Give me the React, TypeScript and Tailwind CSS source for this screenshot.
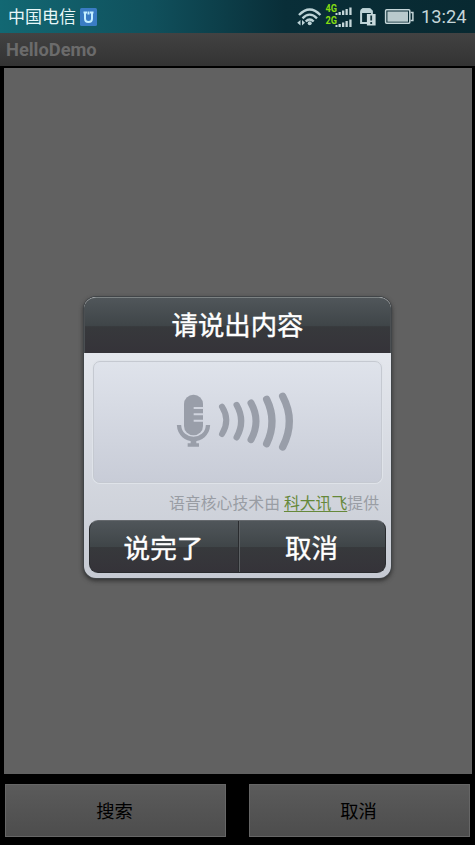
const FONT = "font-['Roboto','Noto_Sans_CJK_SC',sans-serif]";

function NetworkBadge() {
  return (
    <svg className="ml-[4px] h-[18px] w-[17px]" viewBox="0 0 17 18">
      <rect width="17" height="18" rx="1.5" fill="#3a7cc4" />
      <path d="M3.5 4.5H7M10 4.5h3.5M5 4.5v6q0 3.5 3.5 3.5t3.5-3.5v-6M8.5 3.5v3" fill="none" stroke="#c4efff" strokeWidth="2" />
    </svg>
  );
}

function StatusIcons() {
  return (
    <svg className="h-[33px] w-[122px]" viewBox="0 0 122 33">
      <g fill="none" stroke="#bdd3d7" strokeWidth="2.4">
        <path d="M3 15Q13.700 4 24.400 15" />
        <path d="M6.500 18.300Q13.700 11 21 18.300" />
        <path d="M9.700 21.500Q13.700 17.400 17.700 21.500" />
      </g>
      <circle cx="13.700" cy="23.300" r="2" fill="#bdd3d7" />
      <path d="M4.500 20v5.600L1.200 22.800zM6 20v5.600l3-2.800z" fill="#bdd3d7" />
      <text x="29.500" y="12.300" fontSize="10" fontWeight="700" fill="#85dc12" textLength="11.500" lengthAdjust="spacingAndGlyphs">4G</text>
      <text x="29.500" y="24" fontSize="10" fontWeight="700" fill="#85dc12" textLength="11.500" lengthAdjust="spacingAndGlyphs">2G</text>
      <g fill="#c5d6d9">
        <path d="M39.500 13h2v2h-2zM42.500 12h2.300v3h-2.300zM46 10.500h2.300V15H46zM49.500 9h2.300v6h-2.300zM53.300 7.500h2.300V15h-2.300z" />
        <path d="M39.500 25h2v2h-2zM42.500 24h2.300v3h-2.300zM46 22.500h2.300V27H46zM49.500 21h2.300v6h-2.300zM53.300 19.500h2.300V27h-2.300z" />
      </g>
      <g transform="translate(1.400 0)">
        <path d="M70 23h-6.300V12.200L66 9.200h6.500l2 2V14" fill="none" stroke="#bdd3d7" strokeWidth="2" />
        <path d="M63 12V10l1.800-1.800H72l2.500 2.300v2.500H63z" fill="#bdd3d7" />
        <rect x="69.500" y="14" width="8.700" height="11.500" fill="#c8d9dc" />
        <path d="M73.800 15.500v5M73.800 22v2" stroke="#173a42" strokeWidth="1.800" />
      </g>
      <g transform="translate(1.600 0)">
        <rect x="88" y="9.800" width="24.200" height="13.500" rx="1" fill="none" stroke="#c5d6d9" strokeWidth="1.500" />
        <rect x="89.800" y="11.500" width="20.600" height="10.200" fill="#b9cacd" />
        <path d="M113 12.500h2.300v8H113" fill="none" stroke="#c5d6d9" strokeWidth="1.500" />
      </g>
    </svg>
  );
}

function MicWaves() {
  return (
    <svg className="h-[75px] w-[145px]" viewBox="0 0 435 225">
      <rect x="57" y="44" width="57" height="122" rx="28" fill="#999ea9" />
      <path d="M86 84h29M86 103h29M86 122h29" stroke="#d0d4de" strokeWidth="6" />
      <path d="M42 135C45 191 126 191 129 135" fill="none" stroke="#999ea9" strokeWidth="13" />
      <path d="M77 178h17v12h8v10H68v-10h9z" fill="#999ea9" />
      <g fill="none" stroke="#999ea9" strokeLinecap="round">
        <path d="M171 80Q197 121 171 162" strokeWidth="18" />
        <path d="M215 75Q242 123 215 172" strokeWidth="19" />
        <path d="M258 69Q288 123 258 179" strokeWidth="21" />
        <path d="M305 58Q337 124 305 191" strokeWidth="22" />
        <path d="M353 49Q393 124 353 201" strokeWidth="22" />
      </g>
    </svg>
  );
}

const darkPanel = "bg-[linear-gradient(to_bottom,#50565a_0%,#3f4548_51%,#37393c_52%,#353339_100%)]";

function Dialog() {
  return (
    <section className="absolute left-[84px] top-[297px] flex h-[281px] w-[307px] flex-col overflow-hidden rounded-[12px] bg-[linear-gradient(to_bottom,#e4e7ed_56px,#c6cad3_100%)] shadow-[0_0_0_1px_#414548,0_2px_4px_1px_#333]">
      <header className={"flex h-[56px] shrink-0 items-center justify-center rounded-t-[12px] border-t border-[#7c8283] pt-[1px] text-[26.4px] leading-none text-white [-webkit-text-stroke:0.4px_white] shadow-[inset_1px_0_0_#4b4f52,inset_-1px_0_0_#4b4f52] " + darkPanel}>
        <h1 className="font-normal">请说出内容</h1>
      </header>
      <div className="mx-[9px] mt-[8px] flex h-[122px] shrink-0 items-start rounded-[7px] border border-[#c5c9d1] bg-[linear-gradient(to_bottom,#dfe3eb,#c8ccd7)] pl-[71px] pt-[18px] shadow-[0_0_0_1px_#dfe3e9]">
        <MicWaves />
      </div>
      <p className="mt-[8px] flex h-[24px] shrink-0 items-center justify-end whitespace-pre pr-[12px] pt-[1px] text-[15.850px] text-[#999da4]">
        语音核心技术由 <span className="text-[#66883a] underline decoration-1 underline-offset-[2px]">科大讯飞</span>提供
      </p>
      <div className={"mx-[5px] mt-[5px] flex h-[53px] shrink-0 overflow-hidden rounded-[9px] border border-[#292b2e] border-t-[#65696d] text-[26.600px] leading-none text-white [-webkit-text-stroke:0.4px_white] " + darkPanel}>
        <button className="w-[149px] border-r border-[#292b2e] pr-[1px] pt-[5px]">说完了</button>
        <button className="flex-1 border-l border-[#5c6063] pr-[2px] pt-[5px]">取消</button>
      </div>
    </section>
  );
}

export default function App() {
  return (
    <main className={"relative flex h-[845px] w-[475px] flex-col overflow-hidden bg-black " + FONT}>
      <div className="flex h-[33px] shrink-0 items-center bg-[linear-gradient(to_right,#126873_0%,#10505c_32%,#092e38_60%,#082931_100%)] pl-[8px] text-white">
        <span className="pt-[2px] text-[17px] leading-none text-[#e7f7f8]">中国电信</span>
        <NetworkBadge />
        <div className="ml-auto flex items-center">
          <StatusIcons />
          <span className="w-[57px] pl-[3px] pt-[2px] text-[18.300px] leading-none text-[#c5d6d9]">13:24</span>
        </div>
      </div>
      <div className="flex h-[33px] shrink-0 items-center bg-[linear-gradient(to_bottom,#424242,#333)] pl-[6px] text-[18.300px] font-bold text-[#6b6b6b]">HelloDemo</div>
      <div className="ml-[4px] mr-[3px] mt-[2px] h-[706px] shrink-0 bg-[#616161]" />
      <div className="mx-[5px] mt-[10px] flex h-[53px] shrink-0 justify-between text-[18.300px] text-black">
        <button className="w-[221px] border border-[#666] bg-[linear-gradient(to_bottom,#5b5b5b,#4d4d4d)] pr-[2px] pt-[2px]">搜索</button>
        <button className="w-[221px] border border-[#666] bg-[linear-gradient(to_bottom,#5b5b5b,#4d4d4d)] pr-[2px] pt-[2px]">取消</button>
      </div>
      <Dialog />
    </main>
  );
}
